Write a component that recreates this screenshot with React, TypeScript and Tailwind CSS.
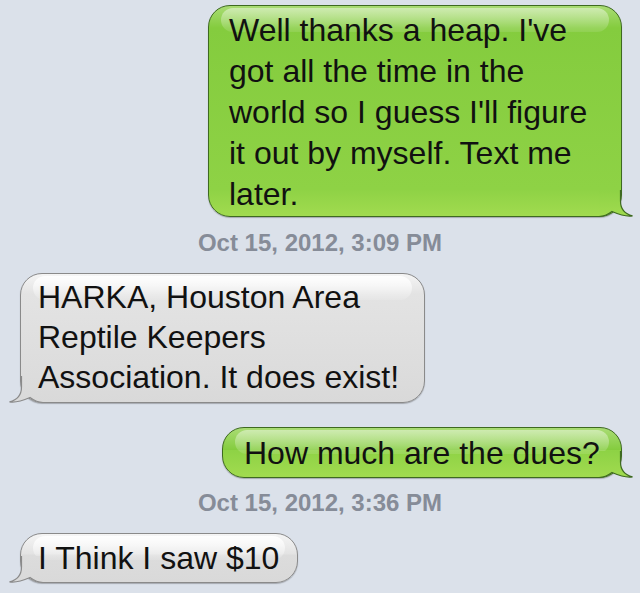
import React from "react";

type Side = "me" | "them";

function Tail({ side }: { side: Side }) {
  const top = side === "me" ? "#8ed245" : "#dcdcdc";
  const bottom = side === "me" ? "#a1db4f" : "#d9d9d9";
  const stroke = side === "me" ? "#3e6a20" : "#8a8a8a";
  const flip = side === "them" ? "scale(-1,1) translate(-36,0)" : undefined;
  const id = `tail-${side}`;
  return (
    <svg
      width="36"
      height="29"
      viewBox="0 0 36 29"
      className={
        side === "me"
          ? "absolute right-[-14px] bottom-[-3px]"
          : "absolute left-[-14px] bottom-[-3px]"
      }
    >
      <defs>
        <linearGradient id={id} x1="0" y1="0" x2="0" y2="26.5" gradientUnits="userSpaceOnUse">
          <stop offset="0" stopColor={top} />
          <stop offset="1" stopColor={bottom} />
        </linearGradient>
      </defs>
      <g transform={flip}>
        <path
          d="M0 0 L21.5 0 L21.5 11 C21.5 19 26 24 33.5 25.8 C28 26.8 20 24.5 13 21.5 C9 24.5 5 26.5 0 26.5 Z"
          fill={`url(#${id})`}
        />
        <path
          d="M21.5 0 L21.5 11 C21.5 19 26 24 33.5 25.8 C28 26.8 20 24.5 13 21.5 C9 24.5 5 26.5 0 26.5"
          fill="none"
          stroke={stroke}
          strokeWidth="1.2"
        />
      </g>
    </svg>
  );
}

function Bubble({
  side,
  className,
  children,
}: {
  side: Side;
  className: string;
  children: React.ReactNode;
}) {
  const skin =
    side === "me"
      ? "border-[#3e6a20] bg-[linear-gradient(180deg,#a9dc74_0px,#84cc3e_22px,#8ed245_calc(100%-27px),#a1db4f_100%)]"
      : "border-[#8a8a8a] bg-[linear-gradient(180deg,#f5f5f5_0px,#e3e3e3_20px,#dcdcdc_calc(100%-27px),#d9d9d9_100%)]";
  const gloss =
    side === "me"
      ? "bg-gradient-to-b from-white/45 to-white/10"
      : "bg-gradient-to-b from-white/90 to-white/10";
  return (
    <div
      className={`relative rounded-[22px] border shadow-[0_1px_1px_rgba(0,0,0,0.25)] text-[32px] text-[#111] ${skin} ${className}`}
    >
      <div
        className={`absolute left-[12px] right-[12px] top-[2px] h-[24px] rounded-[14px] ${gloss}`}
      />
      <Tail side={side} />
      <div className="relative">{children}</div>
    </div>
  );
}

function Stamp({ children, className }: { children: string; className: string }) {
  return (
    <div
      className={`self-center text-[24px] leading-[24px] font-bold text-[#868c98] ${className}`}
    >
      {children}
    </div>
  );
}

export default function App() {
  return (
    <main
      className="w-[640px] h-[593px] overflow-hidden bg-[#dbe1ea] flex flex-col pt-[5px]"
      style={{ fontFamily: '"Liberation Sans", Arial, sans-serif' }}
    >
      <Bubble
        side="me"
        className="self-end mr-[18px] w-[414px] pl-[20px] pt-[4px] pb-[1px] leading-[41px]"
      >
        Well thanks a heap. I've
        <br />
        got all the time in the
        <br />
        world so I guess I'll figure
        <br />
        it out by myself. Text me
        <br />
        later.
      </Bubble>

      <Stamp className="mt-[14px]">Oct 15, 2012, 3:09 PM</Stamp>

      <Bubble
        side="them"
        className="ml-[20px] mt-[18px] w-[405px] pl-[17px] pt-[3px] pb-[5px] leading-[40px]"
      >
        HARKA, Houston Area
        <br />
        Reptile Keepers
        <br />
        Association. It does exist!
      </Bubble>

      <Bubble
        side="me"
        className="self-end mr-[18px] mt-[24px] w-[400px] pl-[21px] pt-[5px] pb-[4px] leading-[40px]"
      >
        How much are the dues?
      </Bubble>

      <Stamp className="mt-[13px]">Oct 15, 2012, 3:36 PM</Stamp>

      <Bubble
        side="them"
        className="ml-[20px] mt-[18px] w-[278px] pl-[17px] pt-[4px] pb-[4px] leading-[40px]"
      >
        I Think I saw $10
      </Bubble>
    </main>
  );
}
